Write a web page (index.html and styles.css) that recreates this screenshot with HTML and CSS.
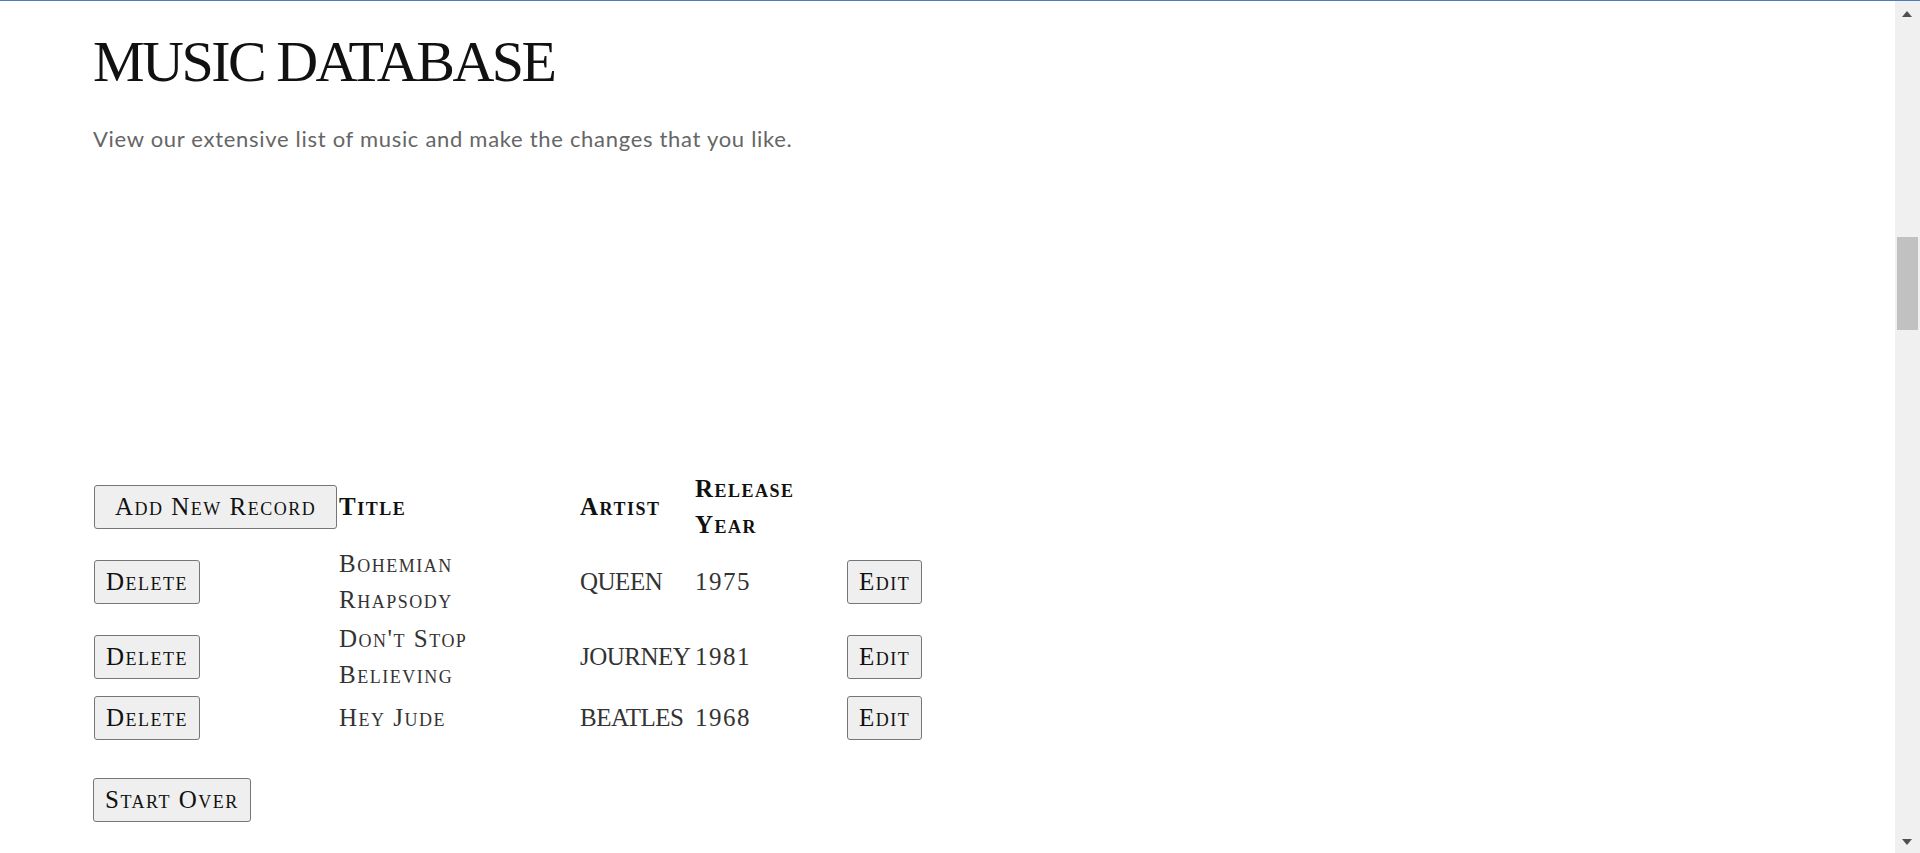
FILE: index.html
```html
<!DOCTYPE html>
<html lang="en">

<head>
  <meta charset="UTF-8">
  <meta name="viewport" content="width=device-width, initial-scale=1.0">
  <title>Music Database</title>
  <link rel="stylesheet" href="styles.css">
</head>

<body>

  <div class="page">
    <h1>MUSIC DATABASE</h1>
    <p class="intro">View our extensive list of music and make the changes that you like.</p>

    <!-- Records Table -->
    <table class="records">
      <thead>
        <tr>
          <th class="col-action"><button class="btn btn-add">Add New Record</button></th>
          <th class="col-title">Title</th>
          <th class="col-artist">Artist</th>
          <th class="col-year">Release Year</th>
          <th class="col-edit"></th>
        </tr>
      </thead>
      <tbody>
        <tr>
          <td><button class="btn">Delete</button></td>
          <td class="title">Bohemian Rhapsody</td>
          <td class="artist">QUEEN</td>
          <td>1975</td>
          <td><button class="btn">Edit</button></td>
        </tr>
        <tr>
          <td><button class="btn">Delete</button></td>
          <td class="title">Don't Stop Believing</td>
          <td class="artist">JOURNEY</td>
          <td>1981</td>
          <td><button class="btn">Edit</button></td>
        </tr>
        <tr>
          <td><button class="btn">Delete</button></td>
          <td class="title">Hey Jude</td>
          <td class="artist">BEATLES</td>
          <td>1968</td>
          <td><button class="btn">Edit</button></td>
        </tr>
      </tbody>
    </table>

    <div class="actions">
      <button class="btn">Start Over</button>
    </div>
  </div>

  <!-- fake window scrollbar -->
  <div class="scrollbar">
    <span class="arrow arrow-up"></span>
    <span class="thumb"></span>
    <span class="arrow arrow-down"></span>
  </div>

</body>

</html>
```

FILE: styles.css
```css
html,
body {
  margin: 0;
  padding: 0;
  overflow: hidden;
}

body {
  background-color: #fff;
  color: #111;
  border-top: 1px solid #4a7dba;
  font-family: 'Lato', 'Liberation Sans', sans-serif;
}

.page {
  padding: 26px 93px 0;
}

h1 {
  margin: 0;
  font-family: 'Liberation Serif', serif;
  font-size: 58px;
  font-weight: 400;
  line-height: 70px;
  letter-spacing: -2.5px;
  color: #111;
}

.intro {
  margin: 29px 0 0;
  font-size: 22px;
  line-height: 26px;
  letter-spacing: 0.7px;
  color: #666;
}

/* Records Table */
.records {
  margin: 316px 0 0 -2px;
  width: 834px;
  table-layout: fixed;
  border-spacing: 2px;
  font-family: 'Liberation Serif', serif;
  font-variant: small-caps;
  font-size: 25px;
  letter-spacing: 1.5px;
  line-height: 35.5px;
}

.records th,
.records td {
  box-sizing: border-box;
  padding: 1px;
  text-align: left;
  vertical-align: middle;
}

.records th {
  font-weight: 700;
  color: #111;
}

.records td {
  color: #333;
}

.col-action { width: 243px; }
.col-title { width: 239px; }
.col-artist { width: 113px; }
.col-year { width: 150px; }
.col-edit { width: 77px; }

.records .col-title,
.records .title {
  padding-right: 30px;
}

.records .artist {
  letter-spacing: -0.5px;
}

.btn {
  font-family: 'Liberation Serif', serif;
  font-variant: small-caps;
  font-size: 25px;
  letter-spacing: 1.5px;
  line-height: 30px;
  white-space: nowrap;
  color: #111;
  background-color: #efefef;
  border: 1px solid #767676;
  border-radius: 3px;
  padding: 6px 11px;
  margin: 0;
  cursor: pointer;
}

.btn:hover {
  background-color: #e5e5e5;
}

.btn-add {
  padding: 6px 20px;
}

.actions {
  margin-top: 35px;
}

/* Scrollbar */
.scrollbar {
  position: fixed;
  top: 1px;
  right: 0;
  bottom: 0;
  width: 25px;
  background-color: #f0f0f0;
}

.thumb {
  position: absolute;
  top: 236px;
  left: 2px;
  width: 21px;
  height: 93px;
  background-color: #c1c1c1;
}

.arrow {
  position: absolute;
  left: 7px;
  width: 0;
  height: 0;
  border-left: 5.5px solid transparent;
  border-right: 5.5px solid transparent;
}

.arrow-up {
  top: 10px;
  border-bottom: 6px solid #505050;
}

.arrow-down {
  bottom: 8px;
  border-top: 6px solid #505050;
}
```
